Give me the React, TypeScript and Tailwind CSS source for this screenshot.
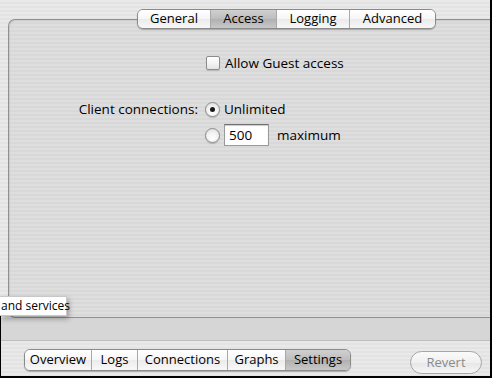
import React from 'react'

const font = "font-['Lucida_Grande','Open_Sans','DejaVu_Sans',sans-serif]"
const stripes = 'bg-[repeating-linear-gradient(180deg,#e9e9e9_0px,#e9e9e9_2px,#e3e3e3_2px,#e3e3e3_4px)]'
const panelStripes = 'bg-[repeating-linear-gradient(180deg,#dedede_0px,#dedede_2px,#d8d8d8_2px,#d8d8d8_4px)]'

const topTabs = [
  { label: 'General', w: 'w-[72px]' },
  { label: 'Access', w: 'w-[66px]', active: true },
  { label: 'Logging', w: 'w-[73px]' },
  { label: 'Advanced', w: 'w-[86px]' },
]

const bottomTabs = [
  { label: 'Overview', w: 'w-[66px]' },
  { label: 'Logs', w: 'w-[46px]' },
  { label: 'Connections', w: 'w-[90px]' },
  { label: 'Graphs', w: 'w-[58px]' },
  { label: 'Settings', w: 'w-[65px]', active: true },
]

function Segmented({ tabs, height }: { tabs: { label: string; w: string; active?: boolean }[]; height: string }) {
  return (
    <div className={`flex ${height} rounded-[6px] border border-[#8a8a8a] overflow-hidden shadow-[0_1px_1px_rgba(0,0,0,0.25)]`}>
      {tabs.map((t, i) => (
        <div
          key={t.label}
          className={`${t.w} flex items-center justify-center text-[13px] text-black ${i > 0 ? 'border-l border-[#a8a8a8]' : ''} ${
            t.active
              ? 'bg-[linear-gradient(180deg,#d0d0d0_0%,#bdbdbd_50%,#b0b0b0_51%,#c8c8c8_100%)]'
              : 'bg-[linear-gradient(180deg,#ffffff_0%,#f6f6f6_50%,#ebebeb_51%,#f8f8f8_100%)]'
          }`}
        >
          {t.label}
        </div>
      ))}
    </div>
  )
}

function Radio({ checked }: { checked?: boolean }) {
  return (
    <div className="w-[15px] h-[15px] rounded-full border border-[#8c8c8c] bg-[radial-gradient(circle_at_50%_70%,#ffffff_0%,#f2f2f2_50%,#d6d6d6_100%)] flex items-center justify-center shadow-[0_1px_1px_rgba(0,0,0,0.2)]">
      {checked && <div className="w-[5px] h-[5px] rounded-full bg-[#1a1a1a]" />}
    </div>
  )
}

export default function App() {
  return (
    <div className={`w-[492px] h-[378px] relative overflow-hidden ${stripes} ${font} flex flex-col`}>
      <div className="flex flex-col pr-[2px] flex-1">
        {/* tabs straddle the top border of the group box */}
        <div className="h-[9px]" />
        <div className="flex relative z-10 -mb-[10px] pl-[137px]">
          <Segmented tabs={topTabs} height="h-[20px]" />
        </div>
        <div className={`ml-[8px] h-[299px] border-t border-l border-b border-[#8f8f8f] rounded-tl-[7px] rounded-bl-[7px] ${panelStripes} shadow-[inset_1px_1px_1px_rgba(0,0,0,0.08)]`}>
          <div className="pt-[33px] grid grid-cols-[196px_1fr] text-[13.5px] text-black">
            <div />
            <div className="flex items-center h-[20px] gap-[5px]">
              <div className="w-[14px] h-[14px] ml-[1px] rounded-[2px] border border-[#8c8c8c] bg-[linear-gradient(180deg,#ffffff_0%,#f4f4f4_50%,#e4e4e4_100%)] shadow-[0_1px_1px_rgba(0,0,0,0.15)]" />
              <span>Allow Guest access</span>
            </div>

            <div className="mt-[26px] h-[20px] flex items-center justify-end pr-[7px]">Client connections:</div>
            <div className="mt-[26px] h-[20px] flex items-center gap-[4px]">
              <Radio checked />
              <span>Unlimited</span>
            </div>

            <div />
            <div className="mt-[5px] h-[22px] flex items-center">
              <Radio />
              <div className="ml-[4px] w-[45px] h-[22px] bg-white border border-[#9a9a9a] border-t-[#6e6e6e] shadow-[inset_0_1px_1px_rgba(0,0,0,0.2)] flex items-center pl-[4px]">
                500
              </div>
              <span className="ml-[8px]">maximum</span>
            </div>
          </div>
        </div>
        <div className="h-[22px] bg-[#d6d6d6]" />
      </div>

      {/* bottom toolbar */}
      <div className={`h-[36px] border-t border-[#bdbdbd] ${stripes} flex items-start pt-[8px] pl-[24px] pr-[10px]`}>
        <Segmented tabs={bottomTabs} height="h-[22px]" />
        <div className="ml-auto mt-[2px] w-[72px] h-[23px] rounded-full border border-[#a6a6a6] bg-[linear-gradient(180deg,#fafafa_0%,#f0f0f0_50%,#e6e6e6_51%,#f6f6f6_100%)] flex items-center justify-center text-[13px] text-[#8a8a8a]">
          Revert
        </div>
      </div>
      <div className="h-[2px] bg-black" />

      {/* window frame edges */}
      <div className="absolute top-0 right-0 w-[2px] h-full bg-black" />
      <div className="absolute left-0 top-[316px] w-[1px] bottom-0 bg-black" />

      {/* tooltip overlapping the group box corner */}
      <div className="absolute left-0 top-[296px] h-[20px] w-[67px] bg-white border border-[#c8c8c8] border-l-0 shadow-[2px_3px_5px_rgba(0,0,0,0.3)] flex items-center pl-[1px] text-[12px] text-black whitespace-nowrap">
        and services
      </div>
    </div>
  )
}
